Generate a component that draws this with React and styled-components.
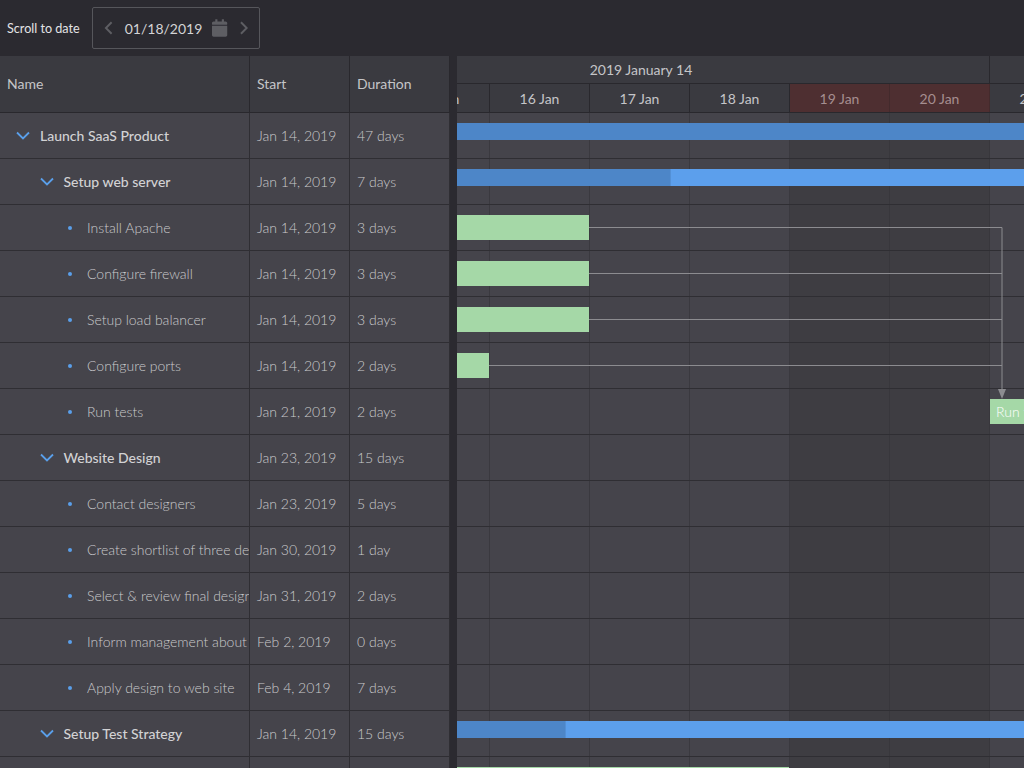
import React from "react";
import styled, { createGlobalStyle } from "styled-components";
import { FaCalendar } from "react-icons/fa";

const GlobalStyle = createGlobalStyle`
  html, body {
    margin: 0;
    height: 100%;
    overflow: hidden;
    background: #45444b;
    font-family: Lato, "Open Sans", sans-serif;
  }
`;

const Page = styled.div`
  width: 1024px;
  height: 768px;
  display: flex;
  flex-direction: column;
  overflow: hidden;
`;

const Toolbar = styled.div`
  height: 56px;
  flex-shrink: 0;
  display: flex;
  align-items: center;
  padding: 0 0 0 7px;
  box-sizing: border-box;
  background: #2b2a30;
`;

const ToolbarLabel = styled.span`
  font-size: 12.6px;
  color: #e3e3e5;
  margin-right: 12.5px;
`;

const DateBox = styled.div`
  width: 168px;
  height: 42px;
  box-sizing: border-box;
  border: 1px solid #56565b;
  border-radius: 2px;
  display: flex;
  align-items: center;
  padding: 0 11px;
  color: #5e5e63;
`;

const DateText = styled.span`
  font-size: 14px;
  color: #d4d4d6;
  margin: 0 10px 0 12px;
`;

const CalendarIcon = styled(FaCalendar)`
  width: 16px;
  height: 18px;
  margin-right: 12px;
`;

const Main = styled.div`
  flex: 1;
  display: flex;
  min-height: 0;
`;

const Grid = styled.div`
  width: 450px;
  flex-shrink: 0;
  overflow: hidden;
`;

const Splitter = styled.div`
  width: 7px;
  flex-shrink: 0;
  background: #2b2a30;
`;

const Timeline = styled.div`
  flex: 1;
  overflow: hidden;
`;

const TimelineInner = styled.div`
  position: relative;
  width: 1000px;
  margin-left: -167px;
`;

const HeaderRow = styled.div`
  height: 57px;
  box-sizing: border-box;
  display: flex;
  background: #3a3a40;
  border-bottom: 1px solid #29282d;
`;

const HeaderCell = styled.div`
  width: ${(p) => p.$width}px;
  flex-shrink: 0;
  box-sizing: border-box;
  display: flex;
  align-items: center;
  padding: 0 0 2px 7px;
  font-size: 14px;
  color: #c5c5c8;
  border-right: 1px solid #29282d;
`;

const Row = styled.div`
  height: 46px;
  box-sizing: border-box;
  display: flex;
  background: #45444b;
  border-bottom: 1px solid #2f2e33;
`;

const Cell = styled.div`
  width: ${(p) => p.$width}px;
  flex-shrink: 0;
  box-sizing: border-box;
  display: flex;
  align-items: center;
  padding-left: 7px;
  font-size: 14px;
  font-weight: 300;
  color: #cacacc;
  white-space: nowrap;
  overflow: hidden;
  border-right: 1px solid #2f2e33;
`;

const NameCell = styled(Cell)`
  padding-left: ${(p) => 17 + p.$level * 23.5}px;
  font-weight: ${(p) => (p.$group ? 500 : 300)};
  color: ${(p) => (p.$group ? "#d2d2d4" : "#cacacc")};
`;

const ToggleSlot = styled.span`
  width: 23px;
  flex-shrink: 0;
  display: flex;
  align-items: center;
`;

const ToggleIcon = styled.svg`
  margin-left: -1px;
`;

const Bullet = styled.span`
  width: 4px;
  height: 4px;
  margin-left: 4px;
  border-radius: 50%;
  background: #5a9fea;
`;

const Scale = styled.div`
  display: flex;
  flex-direction: column;
  height: 57px;
  background: #3a3a40;
  border-bottom: 1px solid #29282d;
  box-sizing: border-box;
`;

const WeekRow = styled.div`
  height: 28px;
  box-sizing: border-box;
  display: flex;
  border-bottom: 1px solid #29282d;
`;

const WeekCell = styled.div`
  width: 700px;
  flex-shrink: 0;
  box-sizing: border-box;
  display: flex;
  align-items: center;
  justify-content: center;
  padding-left: 3px;
  font-size: 14px;
  color: #c5c5c8;
  border-right: 1px solid #29282d;
`;

const DayRow = styled.div`
  height: 28px;
  display: flex;
`;

const DayCell = styled.div`
  width: 100px;
  flex-shrink: 0;
  box-sizing: border-box;
  display: flex;
  align-items: center;
  justify-content: center;
  font-size: 14px;
  color: ${(p) => (p.$weekend ? "#a58e90" : "#c5c5c8")};
  background: ${(p) => (p.$weekend ? "#4e2f31" : "transparent")};
  border-right: 1px solid ${(p) => (p.$weekend ? "#432a2c" : "#29282d")};
`;

const TimeRow = styled.div`
  position: relative;
  height: 46px;
  box-sizing: border-box;
  display: flex;
  border-bottom: 1px solid #2f2e33;
`;

const Tick = styled.div`
  width: 100px;
  flex-shrink: 0;
  box-sizing: border-box;
  background: ${(p) => (p.$weekend ? "#3e3d42" : "#45444b")};
  border-right: 1px solid ${(p) => (p.$weekend ? "#38373c" : "#3a393f")};
`;

const Bar = styled.div`
  position: absolute;
  top: 10px;
  left: ${(p) => p.$left}px;
  width: ${(p) => p.$width}px;
  overflow: hidden;
  white-space: nowrap;
  box-sizing: border-box;
`;

const ParentBar = styled(Bar)`
  height: 17px;
  background: #5c9fec;
`;

const Progress = styled.div`
  height: 100%;
  box-sizing: border-box;
  background: #4d86c8;
  border-right: 1px solid #5390d6;
`;

const TaskBar = styled(Bar)`
  height: 25px;
  line-height: 25px;
  padding-left: 6px;
  background: #a5d8a7;
  color: #ffffff;
  font-size: 14px;
  font-weight: 300;
`;

const Links = styled.svg`
  position: absolute;
  left: 0;
  top: 57px;
  pointer-events: none;
`;

const ChevronDown = () => (
  <ToggleIcon width="14" height="9" viewBox="0 0 14 9" fill="none">
    <path d="M1 1.5L7 7.5L13 1.5" stroke="#5a9fea" strokeWidth="1.8" />
  </ToggleIcon>
);

const Chevron = ({ left }) => (
  <svg width="9" height="14" viewBox="0 0 9 14" fill="none">
    <path d={left ? "M8 1L2 7L8 13" : "M1 1L7 7L1 13"} stroke="#5e5e63" strokeWidth="2" />
  </svg>
);

const tasks = [
  { name: "Launch SaaS Product", level: 0, group: true, start: "Jan 14, 2019", duration: "47 days", parent: { left: 0, width: 4700, progress: 4700 } },
  { name: "Setup web server", level: 1, group: true, start: "Jan 14, 2019", duration: "7 days", parent: { left: 0, width: 1500, progress: 381 } },
  { name: "Install Apache", level: 2, start: "Jan 14, 2019", duration: "3 days", task: { left: 0, width: 299 } },
  { name: "Configure firewall", level: 2, start: "Jan 14, 2019", duration: "3 days", task: { left: 0, width: 299 } },
  { name: "Setup load balancer", level: 2, start: "Jan 14, 2019", duration: "3 days", task: { left: 0, width: 299 } },
  { name: "Configure ports", level: 2, start: "Jan 14, 2019", duration: "2 days", task: { left: 0, width: 199 } },
  { name: "Run tests", level: 2, start: "Jan 21, 2019", duration: "2 days", task: { left: 700, width: 199, label: "Run tests" } },
  { name: "Website Design", level: 1, group: true, start: "Jan 23, 2019", duration: "15 days" },
  { name: "Contact designers", level: 2, start: "Jan 23, 2019", duration: "5 days" },
  { name: "Create shortlist of three designers", level: 2, start: "Jan 30, 2019", duration: "1 day" },
  { name: "Select & review final design", level: 2, start: "Jan 31, 2019", duration: "2 days" },
  { name: "Inform management about decision", level: 2, start: "Feb 2, 2019", duration: "0 days" },
  { name: "Apply design to web site", level: 2, start: "Feb 4, 2019", duration: "7 days" },
  { name: "Setup Test Strategy", level: 1, group: true, start: "Jan 14, 2019", duration: "15 days", parent: { left: 0, width: 1500, progress: 276 } },
  { name: "Hire QA staff", level: 2, start: "Jan 14, 2019", duration: "5 days", task: { left: 0, width: 499 } },
];

const days = [14, 15, 16, 17, 18, 19, 20, 21, 22, 23];
const isWeekend = (day) => day === 19 || day === 20;

const App = () => (
  <Page>
    <GlobalStyle />
    <Toolbar>
      <ToolbarLabel>Scroll to date</ToolbarLabel>
      <DateBox>
        <Chevron left />
        <DateText>01/18/2019</DateText>
        <CalendarIcon />
        <Chevron />
      </DateBox>
    </Toolbar>
    <Main>
      <Grid>
        <HeaderRow>
          <HeaderCell $width={250}>Name</HeaderCell>
          <HeaderCell $width={100}>Start</HeaderCell>
          <HeaderCell $width={100}>Duration</HeaderCell>
        </HeaderRow>
        {tasks.map((t) => (
          <Row key={t.name}>
            <NameCell $width={250} $level={t.level} $group={t.group}>
              <ToggleSlot>{t.group ? <ChevronDown /> : <Bullet />}</ToggleSlot>
              {t.name}
            </NameCell>
            <Cell $width={100}>{t.start}</Cell>
            <Cell $width={100}>{t.duration}</Cell>
          </Row>
        ))}
      </Grid>
      <Splitter />
      <Timeline>
        <TimelineInner>
          <Scale>
            <WeekRow>
              <WeekCell>2019 January 14</WeekCell>
              <WeekCell />
            </WeekRow>
            <DayRow>
              {days.map((d) => (
                <DayCell key={d} $weekend={isWeekend(d)}>{d} Jan</DayCell>
              ))}
            </DayRow>
          </Scale>
          {tasks.map((t) => (
            <TimeRow key={t.name}>
              {days.map((d) => (
                <Tick key={d} $weekend={isWeekend(d)} />
              ))}
              {t.parent && (
                <ParentBar $left={t.parent.left} $width={t.parent.width}>
                  <Progress style={{ width: t.parent.progress }} />
                </ParentBar>
              )}
              {t.task && (
                <TaskBar $left={t.task.left} $width={t.task.width}>
                  {t.task.label}
                </TaskBar>
              )}
            </TimeRow>
          ))}
          <Links width="1000" height="400" fill="none">
            <path d="M299 114.5H712V277M299 160.5H712M299 206.5H712M199 252.5H712" stroke="#8c8c90" strokeWidth="1" />
            <path d="M708 276H716L712 286Z" fill="#8c8c90" />
          </Links>
        </TimelineInner>
      </Timeline>
    </Main>
  </Page>
);

export default App;
